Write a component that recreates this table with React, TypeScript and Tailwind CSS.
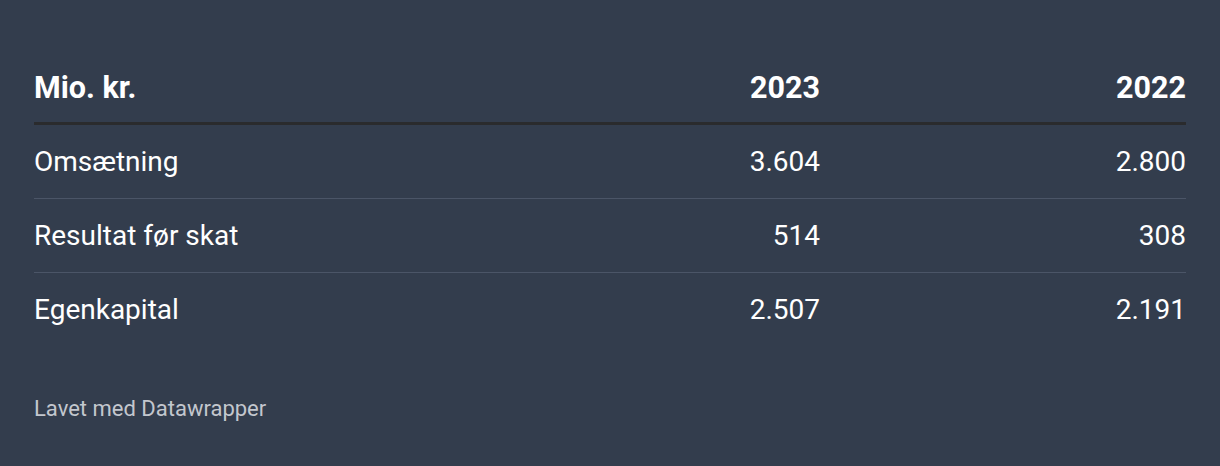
import React from "react";

const rows = [
  ["Omsætning", "3.604", "2.800"],
  ["Resultat før skat", "514", "308"],
  ["Egenkapital", "2.507", "2.191"],
];

export default function App() {
  return (
    <div
      className="w-[1220px] h-[466px] bg-[#333d4d] px-[34px] pt-[54px] text-white"
      style={{ fontFamily: "Roboto, 'Liberation Sans', sans-serif" }}
    >
      <div className="grid grid-cols-[586px_200px_366px] h-[71px] items-center border-b-[3px] border-[#2a2b2d] text-[30.5px] font-bold pb-[1px]">
        <div>Mio. kr.</div>
        <div className="text-right">2023</div>
        <div className="text-right">2022</div>
      </div>
      {rows.map((r, i) => (
        <div
          key={i}
          className={`grid grid-cols-[586px_200px_366px] h-[74px] items-center text-[28px] ${
            i < rows.length - 1 ? "border-b border-[#4b5567]" : ""
          }`}
        >
          <div>{r[0]}</div>
          <div className="text-right">{r[1]}</div>
          <div className="text-right">{r[2]}</div>
        </div>
      ))}
      <div className="mt-[45px] text-[22px] text-[#c3c7ce]">Lavet med Datawrapper</div>
    </div>
  );
}
